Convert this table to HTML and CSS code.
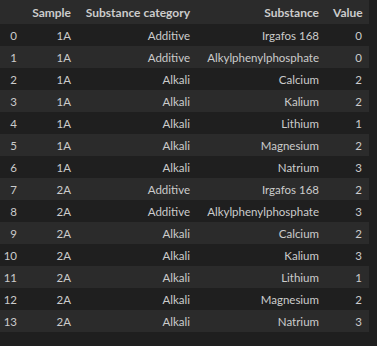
FILE: index.html
```html
<!DOCTYPE html>
<html>
<head>
<meta charset="utf-8">
<link rel="stylesheet" href="styles.css">
</head>
<body>
<table class="df">
  <colgroup>
    <col class="c-idx"><col class="c-sample"><col class="c-cat"><col class="c-sub"><col class="c-val">
  </colgroup>
  <thead>
    <tr><th></th><th>Sample</th><th>Substance category</th><th>Substance</th><th>Value</th></tr>
  </thead>
  <tbody>
    <tr><td class="idx">0</td><td>1A</td><td>Additive</td><td>Irgafos 168</td><td>0</td></tr>
    <tr><td class="idx">1</td><td>1A</td><td>Additive</td><td>Alkylphenylphosphate</td><td>0</td></tr>
    <tr><td class="idx">2</td><td>1A</td><td>Alkali</td><td>Calcium</td><td>2</td></tr>
    <tr><td class="idx">3</td><td>1A</td><td>Alkali</td><td>Kalium</td><td>2</td></tr>
    <tr><td class="idx">4</td><td>1A</td><td>Alkali</td><td>Lithium</td><td>1</td></tr>
    <tr><td class="idx">5</td><td>1A</td><td>Alkali</td><td>Magnesium</td><td>2</td></tr>
    <tr><td class="idx">6</td><td>1A</td><td>Alkali</td><td>Natrium</td><td>3</td></tr>
    <tr><td class="idx">7</td><td>2A</td><td>Additive</td><td>Irgafos 168</td><td>2</td></tr>
    <tr><td class="idx">8</td><td>2A</td><td>Additive</td><td>Alkylphenylphosphate</td><td>3</td></tr>
    <tr><td class="idx">9</td><td>2A</td><td>Alkali</td><td>Calcium</td><td>2</td></tr>
    <tr><td class="idx">10</td><td>2A</td><td>Alkali</td><td>Kalium</td><td>3</td></tr>
    <tr><td class="idx">11</td><td>2A</td><td>Alkali</td><td>Lithium</td><td>1</td></tr>
    <tr><td class="idx">12</td><td>2A</td><td>Alkali</td><td>Magnesium</td><td>2</td></tr>
    <tr><td class="idx">13</td><td>2A</td><td>Alkali</td><td>Natrium</td><td>3</td></tr>
  </tbody>
</table>
</body>
</html>
```
FILE: styles.css
```css
html, body {
  margin: 0;
  padding: 0;
  background: #1f1f1f;
}
.df {
  border-collapse: collapse;
  table-layout: fixed;
  width: 369px;
  font-family: Lato, "Noto Sans", sans-serif;
  font-size: 11.5px;
  color: #cccccc;
}
.c-idx { width: 24px; }
.c-sample { width: 54px; }
.c-cat { width: 119px; }
.c-sub { width: 129px; }
.c-val { width: 43px; }
.df th, .df td {
  text-align: right;
  padding: 0 7px;
  height: 22px;
  white-space: nowrap;
  font-weight: normal;
  overflow: visible;
}
.df td.idx {
  padding: 0 7px 0 0;
  text-align: right;
}
.df thead th {
  height: 24px;
  font-size: 12px;
  font-weight: bold;
  background: #2b2b2b;
}
.df tbody tr:nth-child(even) {
  background: #2b2b2b;
}
```
